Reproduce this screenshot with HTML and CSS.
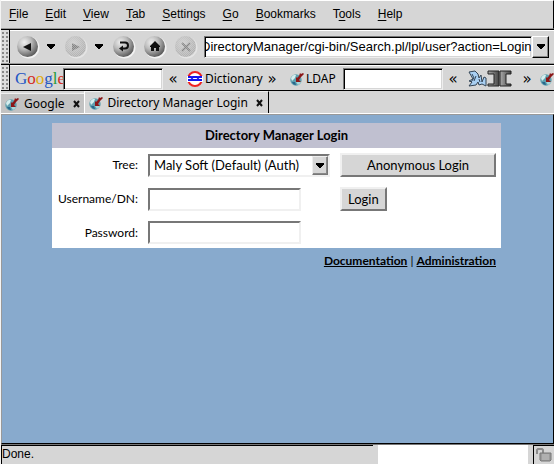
FILE: index.html
```html
<!DOCTYPE html>
<html lang="en">
<head>
<meta charset="utf-8">
<title>Directory Manager Login</title>
<link rel="stylesheet" href="styles.css">
</head>
<body>
<svg width="0" height="0" class="defs" aria-hidden="true">
  <defs>
    <radialGradient id="orb" cx="35%" cy="30%" r="75%"><stop offset="0" stop-color="#eee"/><stop offset=".45" stop-color="#bbb"/><stop offset="1" stop-color="#555"/></radialGradient>
    <radialGradient id="orb-off" cx="40%" cy="35%" r="75%"><stop offset="0" stop-color="#d4d4d4"/><stop offset="1" stop-color="#aaa"/></radialGradient>
    <pattern id="dots" width="2" height="2" patternUnits="userSpaceOnUse"><path d="M0 0h1v1H0zM1 1h1v1H1z" fill="#d6d6d6" opacity=".5"/></pattern>
    <linearGradient id="metal"><stop offset="0" stop-color="#aaa"/><stop offset="1" stop-color="#444"/></linearGradient>
    <symbol id="site" viewBox="0 0 14 14">
      <circle cx="6" cy="8" r="5.7" fill="#5f9fae"/><path d="M1 6q2-4 5-3l-1 3-3 3z" fill="#d4eeee"/><path d="M6 10l4-1 1 2-3 2z" fill="#a8d8dc"/><path d="M2 10l3 0 1 3q-3 0-4-3z" fill="#28688c"/><path d="M6 5v5h5L9 8l2-3 3-3-1-1-2 1-1-1-1 3-2 2z" fill="#8b1718"/>
    </symbol>
    <symbol id="caret" viewBox="0 0 8 5"><path d="M0 0h8v2H7v1H6v1H5v1H3V4H2V3H1V2H0z" fill="#000"/></symbol>
  </defs>
</svg>
<div class="window">
  <nav class="menu">
    <a href="#"><u>F</u>ile</a><a href="#"><u>E</u>dit</a><a href="#"><u>V</u>iew</a><a href="#"><u>T</u>ab</a><a href="#"><u>S</u>ettings</a><a href="#"><u>G</u>o</a><a href="#"><u>B</u>ookmarks</a><a href="#">T<u>o</u>ols</a><a href="#"><u>H</u>elp</a>
  </nav>
  <div class="bar toolbar">
    <span class="grip"></span>
    <div class="buttons">
      <button class="orb" aria-label="Back"><svg viewBox="0 0 24 24"><circle cx="12.500" cy="12.500" r="11" fill="#f2f2f2"/><circle cx="11.500" cy="11.500" r="10.500" fill="url(#orb)"/><path d="M7 12l8-4v8z" fill="#111"/></svg></button>
      <button class="drop" aria-label="Back history"><svg><use href="#caret"/></svg></button>
      <button class="orb" aria-label="Forward" disabled><svg viewBox="0 0 24 24"><circle cx="12.500" cy="12.500" r="11" fill="#e4e4e4"/><circle cx="11.500" cy="11.500" r="10.500" fill="url(#orb-off)"/><path d="M16 12L8 8v8z" fill="#858585"/><circle cx="11.500" cy="11.500" r="10.500" fill="url(#dots)"/></svg></button>
      <button class="drop" aria-label="Forward history"><svg><use href="#caret"/></svg></button>
      <button class="orb" aria-label="Reload"><svg viewBox="0 0 24 24"><circle cx="12.500" cy="12.500" r="11" fill="#f2f2f2"/><circle cx="11.500" cy="11.500" r="10.500" fill="url(#orb)"/><path d="M8 7.500h5q3 0 3 3t-3 3h-2" fill="none" stroke="#111" stroke-width="2"/><path d="M7 13.500l4-3v6z" fill="#111"/></svg></button>
      <button class="orb" aria-label="Home"><svg viewBox="0 0 24 24"><circle cx="12.500" cy="12.500" r="11" fill="#f2f2f2"/><circle cx="11.500" cy="11.500" r="10.500" fill="url(#orb)"/><path d="M12 6l5 5v1h-1v4h-3v-3h-2v3H8v-4H7v-1z" fill="#111"/></svg></button>
      <button class="orb" aria-label="Stop" disabled><svg viewBox="0 0 24 24"><circle cx="12.500" cy="12.500" r="11" fill="#e4e4e4"/><circle cx="11.500" cy="11.500" r="10.500" fill="url(#orb-off)"/><path d="M8 8l8 8M16 8l-8 8" stroke="#858585" stroke-width="2"/><circle cx="11.500" cy="11.500" r="10.500" fill="url(#dots)"/></svg></button>
    </div>
    <div class="address">
      <input class="sunken url" aria-label="Address" value="DirectoryManager/cgi-bin/Search.pl/lpl/user?action=Login">
      <button class="raised" aria-label="Show addresses"><svg><use href="#caret"/></svg></button>
    </div>
  </div>
  <div class="bar bookmarks">
    <span class="grip"></span>
    <div class="marks">
      <label class="google" for="g"><span class="b">G</span><span class="r">o</span><span class="y">o</span><span class="b">g</span><span class="g">l</span><span class="r">e</span></label>
      <input id="g" class="sunken search">
      <button class="chev">«</button>
      <a class="mark dictionary" href="#"><svg width="16" height="16" viewBox="0 0 16 16"><circle cx="8" cy="8" r="7" fill="#fff" stroke="#e22" stroke-width="2"/><path d="M0 5h16v6H0z" fill="#fff"/><path d="M1 6h3l1 1 1-1h4l1 1 1-1h3M1 9h3l1-1 1 1h4l1-1 1 1h3" fill="none" stroke="#1414ee" stroke-width="2"/></svg>Dictionary</a>
      <button class="chev">»</button>
      <label class="mark ldap" for="l"><svg width="14" height="14"><use href="#site"/></svg>LDAP</label>
      <input id="l" class="sunken search">
      <button class="chev">«</button>
      <a class="mark logo" href="#" aria-label="Bookmark"><svg width="44" height="17" viewBox="0 0 44 17"><path d="M1 2l6-1 3 3 1 4 2-3 1 7 2-5 2 1v8l-4-2-3 1-1-3-2 3-7 1 3-4-3-1 4-2z" fill="#a9cff2" stroke="#345" stroke-width="1"/><path d="M4 4l2 4-3 4M8 6l-2 5M11 9l1 3" fill="none" stroke="#345"/><path d="M20 1h11v15H20v-2h6V4h-6z" fill="url(#metal)" stroke="#222"/><path d="M43 1H32v15h11v-2h-5V4h5z" fill="url(#metal)" stroke="#222"/></svg></a>
      <button class="chev">»</button>
      <a class="mark last" href="#" aria-label="Site"><svg width="14" height="14"><use href="#site"/></svg></a>
    </div>
  </div>
  <div class="tabs">
    <div class="tab"><svg width="14" height="14"><use href="#site"/></svg><span>Google</span><button aria-label="Close Google"><svg width="7" height="8" viewBox="0 0 7 8"><path d="M1 1l5 6M6 1L1 7" stroke="#111" stroke-width="2"/></svg></button></div>
    <div class="tab current"><svg width="14" height="14"><use href="#site"/></svg><span>Directory Manager Login</span><button aria-label="Close Directory Manager Login"><svg width="7" height="8" viewBox="0 0 7 8"><path d="M1 1l5 6M6 1L1 7" stroke="#111" stroke-width="2"/></svg></button></div>
  </div>
  <main class="page">
    <form class="panel">
      <h1>Directory Manager Login</h1>
      <div class="fields">
        <label for="tree">Tree:</label>
        <div class="pick"><select id="tree"><option>Maly Soft (Default) (Auth)</option></select><span class="arrow"><svg><use href="#caret"/></svg></span></div>
        <button type="button" class="wide">Anonymous Login</button>
        <label for="user">Username/DN:</label>
        <input id="user" type="text">
        <button type="button" class="login">Login</button>
        <label for="pass">Password:</label>
        <input id="pass" type="password">
      </div>
    </form>
    <p class="links"><a href="#">Documentation</a> | <a href="#">Administration</a></p>
  </main>
  <footer class="status">
    <span class="message">Done.</span>
    <span class="progress"></span>
    <span class="lock"><svg width="16" height="14" viewBox="0 0 16 14"><path d="M1 6V2l1-1h4l1 1v4" fill="none" stroke="#8c8c8c" stroke-width="2"/><path d="M4 5h11v7l-1 1H5l-1-1z" fill="#9c9c9c" stroke="#777"/><path d="M6 7h7M6 9h7M6 11h7" stroke="#c4c4c4"/></svg></span>
  </footer>
</div>
</body>
</html>
```
FILE: styles.css
```css
* { box-sizing: border-box; }
body {
  margin: 0;
  background: #d6d6d6;
  color: #000;
  font: 12px/16px "Liberation Sans", sans-serif;
}
button, input, select { font: inherit; color: inherit; border-radius: 0; outline: 0; }
button { padding: 0; border: 0; background: none; }
a { color: inherit; text-decoration: none; }
svg { display: block; flex: none; }
.defs { position: absolute; }
.window {
  display: flex;
  flex-direction: column;
  min-height: 100vh;
  overflow: hidden;
  border-left: 1px solid #f4f4f4;
}
.menu {
  display: flex;
  gap: 17px;
  height: 29px;
  padding: 5px 8px;
  border-top: 1px solid #fff;
  border-right: 1px solid #000;
  border-bottom: 1px solid #999;
}
.menu u { text-underline-offset: 2px; }
.bar {
  display: flex;
  border-top: 1px solid #000;
  box-shadow: inset 0 1px #fff;
}
.toolbar { height: 35px; border-bottom: 1px solid #999; }
.bookmarks { height: 27px; border-bottom: 1px solid #000; }
.grip {
  flex: none;
  width: 9px;
  border-right: 1px solid #000;
  background: radial-gradient(circle at 1px 1px, #888 1px, transparent 1px) 1px 2px / 4px 4px, #ddd;
}
.buttons { display: flex; align-items: center; padding-left: 6px; gap: 7px; }
.orb, .orb svg { width: 24px; height: 24px; }
.drop { width: 10px; }
.drop svg, .raised svg, .arrow svg { width: 8px; height: 5px; }
.address { display: flex; flex: 1; align-items: center; padding: 0 5px 0 6px; }
.sunken {
  min-width: 0;
  height: 22px;
  padding: 0;
  border: 1px solid;
  border-color: #777 #eee #eee #777;
  background: #fff;
  box-shadow: inset 1px 1px #000, inset -1px -1px #d6d6d6;
}
.url { flex: 1; padding-left: 1px; text-indent: -5px; font-size: 13px; }
.raised {
  display: grid;
  place-items: center;
  width: 17px;
  height: 22px;
  border: 1px solid;
  border-color: #fff #000 #000 #fff;
  box-shadow: inset -1px -1px #888;
}
.marks { display: flex; flex: 1; min-width: 0; align-items: center; padding: 2px 0 0 5px; }
.google { flex: none; width: 48px; font: 17px/20px "Liberation Serif", serif; }
.b { color: #2456c4; }
.r { color: #d32d24; }
.y { color: #e0ac10; }
.g { color: #259b35; }
.search { flex: none; width: 100px; }
.chev { flex: none; width: 20px; font: 15px/16px "DejaVu Sans", sans-serif; }
.mark { display: flex; flex: none; align-items: center; gap: 2px; }
.dictionary { width: 79px; padding-left: 4px; }
.ldap { width: 61px; padding-left: 8px; }
.logo { width: 54px; padding-left: 5px; }
.last { padding-left: 3px; }
.dictionary, .ldap, .tab { font-family: "Noto Sans", sans-serif; }
.tabs { display: flex; height: 23px; align-items: stretch; border-bottom: 1px solid #fff; }
.tab {
  display: flex;
  align-items: center;
  gap: 5px;
  margin-top: 2px;
  padding: 0 4px;
  border-top: 1px solid #f0f0f0;
  background: #c3c3c3;
}
.tab button { padding-left: 3px; }
.tab.current {
  margin-top: 0;
  padding-right: 5px;
  border-left: 1px solid #fff;
  border-right: 1px solid #000;
  background: #d6d6d6;
}
.page {
  flex: 1;
  padding: 8px 52px 8px 50px;
  border: 1px solid #999;
  border-right-color: #000;
  border-bottom-color: #000;
  background: #88aacd;
  font-family: Lato, sans-serif;
}
.panel { background: #fff; }
h1 {
  margin: 0;
  background: #c0c0d0;
  font-size: 13px;
  line-height: 25px;
  text-align: center;
}
.fields {
  display: grid;
  grid-template-columns: 86px 182px 1fr;
  gap: 10px;
  padding: 5px 5px 4px 0;
  align-items: center;
}
.fields label { text-align: right; white-space: nowrap; }
.fields input, .pick {
  height: 23px;
  border: 2px solid;
  border-color: #777 #f0f0f0 #f0f0f0 #777;
  background: #fff;
}
.fields input { width: 153px; }
.pick { display: flex; position: relative; }
.pick select { flex: 1; padding: 0 4px; border: 0; background: transparent; appearance: none; font-size: 13px; }
.arrow {
  position: absolute;
  inset: 0 0 0 auto;
  display: grid;
  place-items: center;
  width: 16px;
  border: 1px solid;
  border-color: #eee #777 #777 #eee;
  box-shadow: inset -1px -1px #888;
  background: #d6d6d6;
  pointer-events: none;
}
.wide, .login {
  height: 24px;
  padding: 0 6px;
  border: 2px solid;
  border-color: #f0f0f0 #777 #777 #f0f0f0;
  background: #d6d6d6;
  font-size: 13px;
}
.login { justify-self: start; }
.links { margin: 5px 5px 0; text-align: right; }
.links a { font-weight: bold; text-decoration: underline; }
.status {
  display: flex;
  height: 20px;
  border-top: 1px solid #777;
}
.message { flex: 1; border-top: 1px solid #000; border-left: 1px solid #000; line-height: 17px; }
.progress { width: 150px; margin: 0 5px; background: #fff; }
.lock { width: 21px; padding: 2px; border-top: 1px solid #000; border-left: 1px solid #000; }
```
